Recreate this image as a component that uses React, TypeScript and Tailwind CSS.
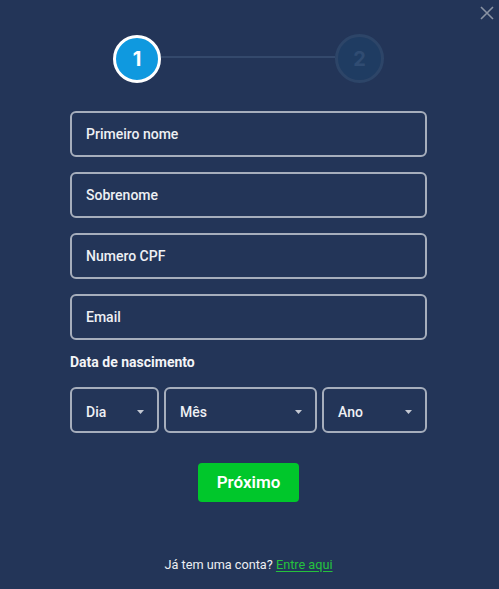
import React from "react";

const fields = ["Primeiro nome", "Sobrenome", "Numero CPF", "Email"];

function Caret() {
    return (
        <svg width="7" height="4" viewBox="0 0 7 4" className="shrink-0">
            <path d="M0 0h7L3.5 4z" fill="#c3c8d2" />
        </svg>
    );
}

function SelectBox({ label, className }: { label: string; className: string }) {
    return (
        <div className={`h-[46px] rounded-[6px] border-2 border-[#a6aebc] flex items-center justify-between pl-[14px] pr-[13px] pt-[4px] ${className}`}>
            <span className="text-[14px] font-medium text-[#eef0f4]">{label}</span>
            <Caret />
        </div>
    );
}

export default function App() {
    return (
        <div className="relative w-[499px] h-[589px] bg-[#233558] text-white overflow-hidden" style={{ fontFamily: "Roboto, 'Liberation Sans', sans-serif" }}>
            <button className="absolute right-[4px] top-[5px] p-[1px]">
                <svg width="14" height="14" viewBox="0 0 14 14">
                    <path d="M1 1L13 13M13 1L1 13" stroke="#8a93a3" strokeWidth="1.6" />
                </svg>
            </button>

            <div className="flex flex-col items-start pl-[70px] pt-[34px]">
                {/* stepper */}
                <div className="flex items-center w-[271px] ml-[43px]">
                    <div className="w-[48px] h-[48px] rounded-full bg-[#0f99df] border-[3px] border-white flex items-center justify-center shrink-0">
                        <span className="text-[20px] font-bold" style={{ fontFamily: "Inter, sans-serif" }}>1</span>
                    </div>
                    <div className="flex-1 h-[2px] bg-[#34496c] -mt-[4px]" />
                    <div className="w-[49px] h-[49px] rounded-full bg-[#1f3c62] border-[3px] border-[#2d4568] flex items-center justify-center shrink-0">
                        <span className="text-[20px] font-bold text-[#304c72]" style={{ fontFamily: "Inter, sans-serif" }}>2</span>
                    </div>
                </div>

                {/* form */}
                <div className="w-[357px] mt-[28px] flex flex-col gap-[15px]">
                    {fields.map((f) => (
                        <div key={f} className="h-[46px] rounded-[6px] border-2 border-[#a6aebc] flex items-center pl-[14px]">
                            <span className="text-[14px] font-medium text-[#eef0f4]">{f}</span>
                        </div>
                    ))}
                </div>

                <div className="w-[357px] mt-[12px]">
                    <p className="text-[14px] font-bold leading-[20px] text-[#f3f4f7]">Data de nascimento</p>
                    <div className="flex gap-[5px] mt-[15px]">
                        <SelectBox label="Dia" className="w-[89px]" />
                        <SelectBox label="Mês" className="w-[153px]" />
                        <SelectBox label="Ano" className="w-[105px]" />
                    </div>
                </div>

                <div className="w-[357px] flex flex-col items-center">
                    <button className="mt-[30px] w-[101px] h-[39px] rounded-[4px] bg-[#00c72b] text-[17px] font-semibold text-white">
                        Próximo
                    </button>

                    <p className="mt-[53px] text-[12.7px] text-[#eceef2]">
                        Já tem uma conta?{" "}
                        <a href="#" className="text-[#25c23d] underline underline-offset-2">Entre aqui</a>
                    </p>
                </div>
            </div>
        </div>
    );
}
